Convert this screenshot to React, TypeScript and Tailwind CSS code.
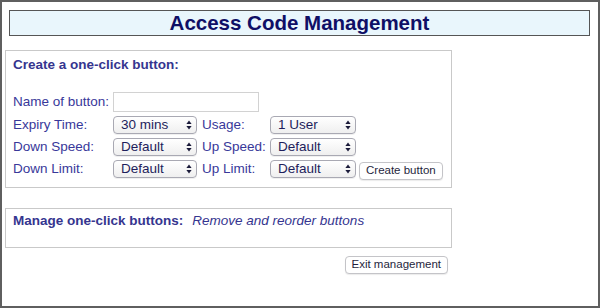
import type { ReactNode } from "react";

const font = { fontFamily: '"Liberation Sans", Arial, Helvetica, sans-serif' };

function Arrows() {
  return (
    <svg width="6" height="10" viewBox="0 0 6 10" className="shrink-0">
      <path d="M3 0.5 L5.6 4 L0.4 4 Z" fill="#1b1b3a" />
      <path d="M3 9.5 L5.6 6 L0.4 6 Z" fill="#1b1b3a" />
    </svg>
  );
}

function FakeSelect({ value, width }: { value: string; width: string }) {
  return (
    <div
      className={`${width} h-[18px] flex items-center justify-between pl-[7px] pr-[4px] rounded-[4px] border border-[#a9a9b3] bg-gradient-to-b from-white to-[#efefef] shadow-[0_1px_0_rgba(0,0,0,0.06)] text-[13.5px] leading-none text-[#1e1e5c]`}
    >
      <span>{value}</span>
      <Arrows />
    </div>
  );
}

function Label({ children, width }: { children: ReactNode; width: string }) {
  return <div className={`${width} text-[13.5px] leading-[16px] text-[#38389a]`}>{children}</div>;
}

function Button({ children }: { children: ReactNode }) {
  return (
    <button className="h-[18px] px-[6px] rounded-[4px] border border-[#c4c4c8] bg-white shadow-[0_1px_1px_rgba(0,0,0,0.08)] text-[11.5px] leading-none text-[#1f1f3d]">
      {children}
    </button>
  );
}

export default function App() {
  return (
    <div style={font} className="w-[600px] h-[308px] border-2 border-[#5f5f5f] bg-white pt-[8px] overflow-hidden">
      <div className="ml-[7px] w-[581px] h-[26px] border border-[#555] bg-[#e9f6fc] flex items-center justify-center">
        <h1 className="text-[20.5px] font-bold leading-none text-[#0f0f66]">Access Code Management</h1>
      </div>

      <div className="mt-[14px] ml-[3px] w-[447px] h-[138px] border border-[#c9c9c9] pt-[6px] pl-[7px]">
        <div className="text-[13.5px] font-bold leading-[16px] text-[#35358f]">Create a one-click button:</div>

        <div className="mt-[19px] flex items-center h-[20px]">
          <Label width="w-[100px]">Name of button:</Label>
          <input
            type="text"
            className="w-[146px] h-[20px] border border-[#d2d2d2] bg-white outline-none"
          />
        </div>

        <div className="mt-[4px] flex items-center h-[18px]">
          <Label width="w-[100px]">Expiry Time:</Label>
          <FakeSelect value="30 mins" width="w-[84px]" />
          <Label width="ml-[5px] w-[68px]">Usage:</Label>
          <FakeSelect value="1 User" width="w-[86px]" />
        </div>

        <div className="mt-[4px] flex items-center h-[18px]">
          <Label width="w-[100px]">Down Speed:</Label>
          <FakeSelect value="Default" width="w-[84px]" />
          <Label width="ml-[5px] w-[68px]">Up Speed:</Label>
          <FakeSelect value="Default" width="w-[86px]" />
        </div>

        <div className="mt-[4px] flex items-center h-[18px]">
          <Label width="w-[100px]">Down Limit:</Label>
          <FakeSelect value="Default" width="w-[84px]" />
          <Label width="ml-[5px] w-[68px]">Up Limit:</Label>
          <FakeSelect value="Default" width="w-[86px]" />
          <div className="ml-[3px]">
            <Button>Create button</Button>
          </div>
        </div>
      </div>

      <div className="mt-[20px] ml-[3px] w-[447px] h-[40px] border border-[#c9c9c9] pt-[4px] pl-[7px] text-[13.5px] leading-[16px] text-[#35358f]">
        <span className="font-bold">Manage one-click buttons:</span>
        <span className="ml-[9px] italic">Remove and reorder buttons</span>
      </div>

      <div className="ml-[3px] w-[447px] mt-[8px] flex justify-end pr-[4px]">
        <Button>Exit management</Button>
      </div>
    </div>
  );
}
